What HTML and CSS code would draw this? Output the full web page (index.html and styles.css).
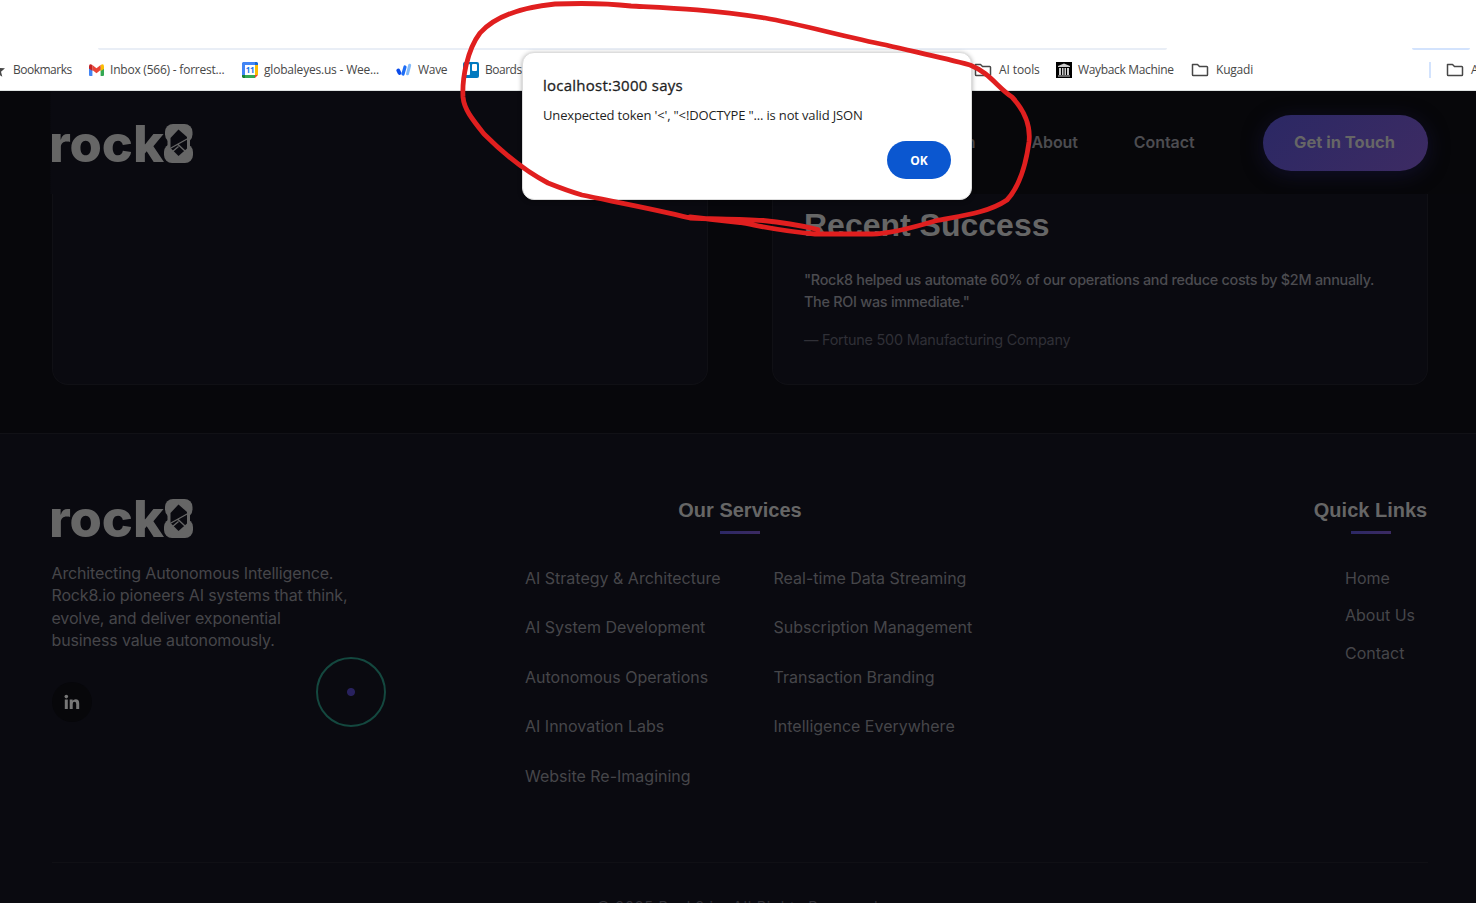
FILE: index.html
```html
<!DOCTYPE html>
<html lang="en">
<head>
<meta charset="utf-8">
<title>Rock8</title>
<link rel="stylesheet" href="styles.css">
</head>
<body>
<div class="screen">
  <div class="browser">
    <div class="toolbar"><i class="omnibox"></i><i class="chip"></i></div>
    <div class="bookmarks">
      <div class="bm b1"><svg width="16" height="16" viewBox="0 0 16 16"><path fill="#474747" d="M8 1l2 5 5 .3-4 3.400 1.300 5L8 12l-4.300 2.700L5 9.700 1 6.300 6 6z"/></svg><span>Bookmarks</span></div>
      <div class="bm b2"><svg width="15" height="12" viewBox="0 0 15 12"><path fill="#4285f4" d="M0 2h3.400v10H1q-1 0-1-1z"/><path fill="#34a853" d="M11.600 3H15v8q0 1-1 1h-2.400z"/><path fill="#fbbc04" d="M11.600 1Q15-1 15 2.500V5l-3.400 2z"/><path fill="#c5221f" d="M0 2.500Q0-1 3.400 1v6L0 4.500z"/><path fill="#ea4335" d="M3.400 1l4.100 3.300L11.600 1v5L7.500 9.300 3.400 6z"/></svg><span>Inbox (566) - forrest...</span></div>
      <div class="bm b3"><svg width="16" height="16" viewBox="0 0 16 16"><path fill="#4285f4" d="M1 0h12v3H3v10H0V1z"/><path fill="#1967d2" d="M13 0h2l1 1v2h-3z"/><path fill="#fbbc04" d="M13 3h3v10h-3z"/><path fill="#34a853" d="M3 13h10v3H3z"/><path fill="#188038" d="M0 13h3v3H1l-1-1z"/><path fill="#ea4335" d="M13 13h3l-3 3z"/><path fill="#fff" d="M3 3h10v10H3z"/><text class="cal" x="8" y="11" text-anchor="middle">11</text></svg><span>globaleyes.us - Wee...</span></div>
      <div class="bm b4"><svg width="16" height="14" viewBox="0 0 16 14"><g fill="none" stroke-linecap="round"><path stroke="#83bbfa" stroke-width="3" d="M13.700 2.200l-2.200 8.600"/><path stroke="#1c6cf5" stroke-width="3.200" d="M9 4L7 11"/><path stroke="#0a4bea" stroke-width="3.800" d="M2.300 7.500L3.500 10"/></g></svg><span>Wave</span></div>
      <div class="bm b5"><svg width="16" height="16" viewBox="0 0 16 16"><rect width="16" height="16" rx="2" fill="#0079bf"/><rect x="2" y="2" width="5" height="11" rx="1" fill="#fff"/><rect x="9" y="2" width="5" height="7" rx="1" fill="#fff"/></svg><span>Boards</span></div>
      <div class="bm b6"><svg width="18" height="14" viewBox="0 0 18 14"><path class="folder" d="M1.500 1.500h5l2 2h7.200q.8 0 .8.800v7.400q0 .8-.8.800H2.300q-.8 0-.8-.8z"/></svg><span>AI tools</span></div>
      <div class="bm b7"><svg width="16" height="16" viewBox="0 0 16 16"><path d="M0 0h16v16H0z"/><path fill="#ccc" d="M2 4l6-2.500L14 4v1H2zM3 6h2v7H3zM6 6h1.500v7H6zM8.500 6H10v7H8.500zM11 6h2v7h-2zM2 13.500h12v1H2z"/></svg><span>Wayback Machine</span></div>
      <div class="bm b8"><svg width="18" height="14" viewBox="0 0 18 14"><path class="folder" d="M1.500 1.500h5l2 2h7.200q.8 0 .8.800v7.400q0 .8-.8.800H2.300q-.8 0-.8-.8z"/></svg><span>Kugadi</span></div>
      <i class="sep"></i>
      <div class="bm b9"><svg width="18" height="14" viewBox="0 0 18 14"><path class="folder" d="M1.500 1.500h5l2 2h7.200q.8 0 .8.800v7.400q0 .8-.8.800H2.300q-.8 0-.8-.8z"/></svg><span>A</span></div>
    </div>
  </div>

  <header class="site-header">
    <svg class="logo" width="144" height="44" viewBox="0 0 144 44">
      <text class="logo-word" x="-3" y="41" textLength="115" lengthAdjust="spacingAndGlyphs">rock</text>
      <text class="logo-eight" x="112.500" y="40.500" textLength="28" lengthAdjust="spacingAndGlyphs">8</text>
      <g class="logo-plate"><rect x="113" y="3" width="27.500" height="18.500" rx="8"/><rect x="112" y="23" width="29" height="19" rx="8"/><rect x="115.500" y="16" width="22.500" height="12"/></g>
      <path class="rock" d="M126.500 8.500l8.500 7.500v11.500l-8.500 7.500-8-8V17z"/>
      <path class="crack" d="M118 27.500l18-10M126 23.500l7 6.500M120.500 30.500l6-5"/>
    </svg>
    <nav class="nav"><a>Innovation</a><a>About</a><a>Contact</a></nav>
    <a class="cta">Get in Touch</a>
  </header>

  <main class="cards">
    <section class="card"></section>
    <section class="card">
      <h2>Recent Success</h2>
      <p class="quote">"Rock8 helped us automate 60% of our operations and reduce costs by $2M annually.<br>The ROI was immediate."</p>
      <p class="by">— Fortune 500 Manufacturing Company</p>
    </section>
  </main>

  <footer class="footer">
    <div class="columns">
      <div class="brand">
        <svg class="logo" width="144" height="44" viewBox="0 0 144 44">
          <text class="logo-word" x="-3" y="41" textLength="115" lengthAdjust="spacingAndGlyphs">rock</text>
          <text class="logo-eight" x="112.500" y="40.500" textLength="28" lengthAdjust="spacingAndGlyphs">8</text>
          <g class="logo-plate"><rect x="113" y="3" width="27.500" height="18.500" rx="8"/><rect x="112" y="23" width="29" height="19" rx="8"/><rect x="115.500" y="16" width="22.500" height="12"/></g>
          <path class="rock" d="M126.500 8.500l8.500 7.500v11.500l-8.500 7.500-8-8V17z"/>
          <path class="crack" d="M118 27.500l18-10M126 23.500l7 6.500M120.500 30.500l6-5"/>
        </svg>
        <p>Architecting Autonomous Intelligence.<br>Rock8.io pioneers AI systems that think,<br>evolve, and deliver exponential<br>business value autonomously.</p>
        <div class="social"><svg width="16" height="16" viewBox="0 0 16 16"><g fill="#777"><circle cx="2.300" cy="2.600" r="1.800"/><path d="M.8 5.500h3V15h-3zM5.700 5.500h2.900v1.300Q9.500 5.200 11.700 5.200q3.500 0 3.500 4.200V15h-3V10q0-2.300-1.700-2.300-1.800 0-1.800 2.300v5h-3z"/></g></svg></div>
      </div>
      <div class="services">
        <h3>Our Services</h3>
        <div class="service-grid">
          <a>AI Strategy &amp; Architecture</a><a>Real-time Data Streaming</a>
          <a>AI System Development</a><a>Subscription Management</a>
          <a>Autonomous Operations</a><a>Transaction Branding</a>
          <a>AI Innovation Labs</a><a>Intelligence Everywhere</a>
          <a>Website Re-Imagining</a>
        </div>
      </div>
      <div class="quick">
        <h3>Quick Links</h3>
        <div class="links"><a>Home</a><a>About Us</a><a>Contact</a></div>
      </div>
    </div>
    <div class="copyright">© 2025 Rock8.io. All Rights Reserved.</div>
  </footer>

  <div class="cursor-ring"></div>

  <div class="dialog">
    <div class="dialog-title">localhost:3000 says</div>
    <div class="dialog-text">Unexpected token '&lt;', "&lt;!DOCTYPE "... is not valid JSON</div>
    <button class="ok">OK</button>
  </div>

  <svg class="marker" width="1476" height="260" viewBox="0 0 1476 260">
    <path d="M818 229.500C805 226.500 785 222.500 763 220.500C740 219 715 219 690 218C650 208 610 201 582 195C568 191 558 187 548 183C525 171 500 150 484 134C472 119 464 109 463 97C462 79 467 50 480 33C497 14 525 7 555 4C582 3 605 3 631 6C670 8 705 9 765 18C800 24 845 37 886 45C915 52 940 57 970 65C990 73 997 87 1012 97C1024 110 1031 124 1029 142C1026 164 1019 187 1007 200C988 213 960 216 935 221C905 230 885 234 872 234H815C780 231 760 226 740 222.500L690 217"/>
  </svg>
</div>
</body>
</html>
```
FILE: styles.css
```css
* { box-sizing: border-box; }
body { margin: 0; background: #07070b; overflow: hidden; }
h2, h3, p { margin: 0; }
.screen { position: relative; width: 1476px; height: 903px; overflow: hidden; font-family: Inter, "Liberation Sans", sans-serif; color: #4c4c50; }

.browser { height: 91px; background: #fff; border-bottom: 1px solid #dfe3e3; }
.toolbar { height: 50px; padding: 48px 6px 0 98px; display: flex; justify-content: space-between; }
.omnibox { width: 1069px; height: 2px; background: #e9eef6; border-radius: 0 0 8px 8px; }
.chip { width: 58px; height: 2px; background: #d3e3fd; border-radius: 0 0 8px 8px; }
.bookmarks { height: 40px; display: flex; align-items: center; font: 12px/16px "Open Sans", "Noto Sans", sans-serif; color: #474747; }
.bm { display: flex; align-items: center; gap: 6px; white-space: nowrap; flex: none; }
.bm svg { flex: none; }
.b1 { margin-left: -10px; width: 99px; gap: 7px; letter-spacing: -.5px; }
.b2 { width: 153px; letter-spacing: -.22px; }
.b3 { width: 154px; letter-spacing: -.2px; }
.b4 { width: 67px; letter-spacing: -.3px; }
.b5 { width: 511px; letter-spacing: -.5px; }
.b6 { width: 82px; gap: 7px; letter-spacing: -.1px; }
.b7 { width: 135px; letter-spacing: -.33px; }
.b8 { width: 238px; letter-spacing: -.2px; }
.b8, .b9 { gap: 7px; }
.folder { fill: none; stroke: #474747; stroke-width: 1.500px; stroke-linejoin: round; }
.sep { flex: none; width: 2px; height: 16px; background: #d3e3fd; margin-right: 15px; }
.cal { font: bold 8px "Open Sans", sans-serif; fill: #1a73e8; }

.logo { display: block; flex: none; }
.logo-word { font: 800 51px Inter, sans-serif; fill: #666; }
.logo-eight { font: 800 50px "Open Sans", sans-serif; fill: #666; stroke: #666; stroke-width: 1.500px; }
.logo-plate { fill: #666; }
.rock { fill: #0a0a10; }
.crack { fill: none; stroke: #666; stroke-width: 1.400px; }

.site-header { height: 103px; display: flex; align-items: center; padding: 0 48px 0 52px; background: linear-gradient(90deg, #07070b 0 50px, #0a0a10 51px 708px, #07070a 709px); }
.nav { display: flex; gap: 56px; margin: -2px 68.500px 0 auto; font-size: 16px; font-weight: 600; letter-spacing: -.08px; }
.cta { width: 165px; height: 56px; border-radius: 28px; background: linear-gradient(135deg, #2b2864, #3d2b63); box-shadow: 0 4px 20px #17153d99; color: #666; font-size: 16.500px; font-weight: 700; line-height: 55px; text-align: center; padding-right: 2px; }

.cards { height: 239px; padding: 0 48px 48px 52px; display: grid; grid-template-columns: 656px 656px; gap: 64px; background: #07070b; }
.card { border: 1px solid #101015; border-top: 0; border-radius: 0 0 16px 16px; background: #0a0a10; padding: 10px 31px 0; }
.card h2 { font: bold 32px/42px "Liberation Sans", Arial, sans-serif; color: #666; }
.quote { margin-top: 23px; font-size: 14.400px; line-height: 22px; font-weight: 500; letter-spacing: -.27px; color: #4c4c50; white-space: nowrap; }
.by { margin-top: 16px; font-size: 14.400px; line-height: 22px; letter-spacing: -.22px; color: #303037; }

.footer { height: 470px; background: #0a0a10; border-top: 1px solid #111116; padding: 62px 48px 0 52px; }
.columns { height: 366px; display: flex; }
.brand { width: 330px; }
.brand p { margin: 22px 0 0 -.5px; font-size: 16px; line-height: 22.400px; letter-spacing: -.15px; white-space: nowrap; color: #46464a; }
.social { width: 40px; height: 40px; margin-top: 30px; border-radius: 50%; background: #07070a; display: flex; align-items: center; justify-content: center; }
.footer h3 { height: 46px; font: bold 20px/28px "Liberation Sans", Arial, sans-serif; color: #666; display: flex; flex-direction: column; align-items: center; white-space: nowrap; }
.footer h3::after { content: ""; width: 40px; height: 3px; margin-top: 7px; background: linear-gradient(90deg, #2c2865, #3b2a62); }
.services { width: 448px; margin-left: 143px; }
.services h3 { width: 430px; }
.service-grid { margin-top: 25px; display: grid; grid-template-columns: 248.500px 200px; row-gap: 27.450px; font-size: 16px; line-height: 22px; color: #46464a; }
.quick { width: 113px; margin-left: auto; margin-right: 1px; }
.links { margin: 25px 0 0 31px; display: grid; gap: 15.400px; font-size: 16px; line-height: 22px; white-space: nowrap; color: #46464a; }
.copyright { border-top: 1px solid #101015; padding-top: 33px; font-size: 14.400px; line-height: 22px; letter-spacing: .75px; text-align: center; color: #303037; }

.cursor-ring { position: absolute; left: 316px; top: 657px; width: 70px; height: 70px; border: 2px solid #14483f; border-radius: 50%; background: radial-gradient(circle, #28215e 0 3.500px, transparent 4.500px); }

.dialog { position: absolute; left: 522px; top: 52px; width: 450px; height: 148px; border-radius: 12px; background: #fff; border: 1px solid #ddd; box-shadow: 0 1px 5px #0005; padding: 20px; font-family: "Open Sans", "Noto Sans", sans-serif; color: #1f1f1f; white-space: nowrap; }
.dialog-title { font-size: 15px; font-weight: 500; line-height: 24px; letter-spacing: .25px; -webkit-text-stroke: .3px #1f1f1f; }
.dialog-text { margin-top: 8px; font-size: 13px; line-height: 20px; letter-spacing: -.16px; }
.ok { display: block; margin: 16px 0 0 auto; width: 64px; height: 38px; border: 0; border-radius: 19px; background: #0b57d0; color: #fff; font: bold 12px "Open Sans", sans-serif; }
.marker { position: absolute; left: 0; top: 0; }
.marker path { fill: none; stroke: #e01f1f; stroke-width: 4.800px; stroke-linejoin: round; stroke-linecap: round; }
```
